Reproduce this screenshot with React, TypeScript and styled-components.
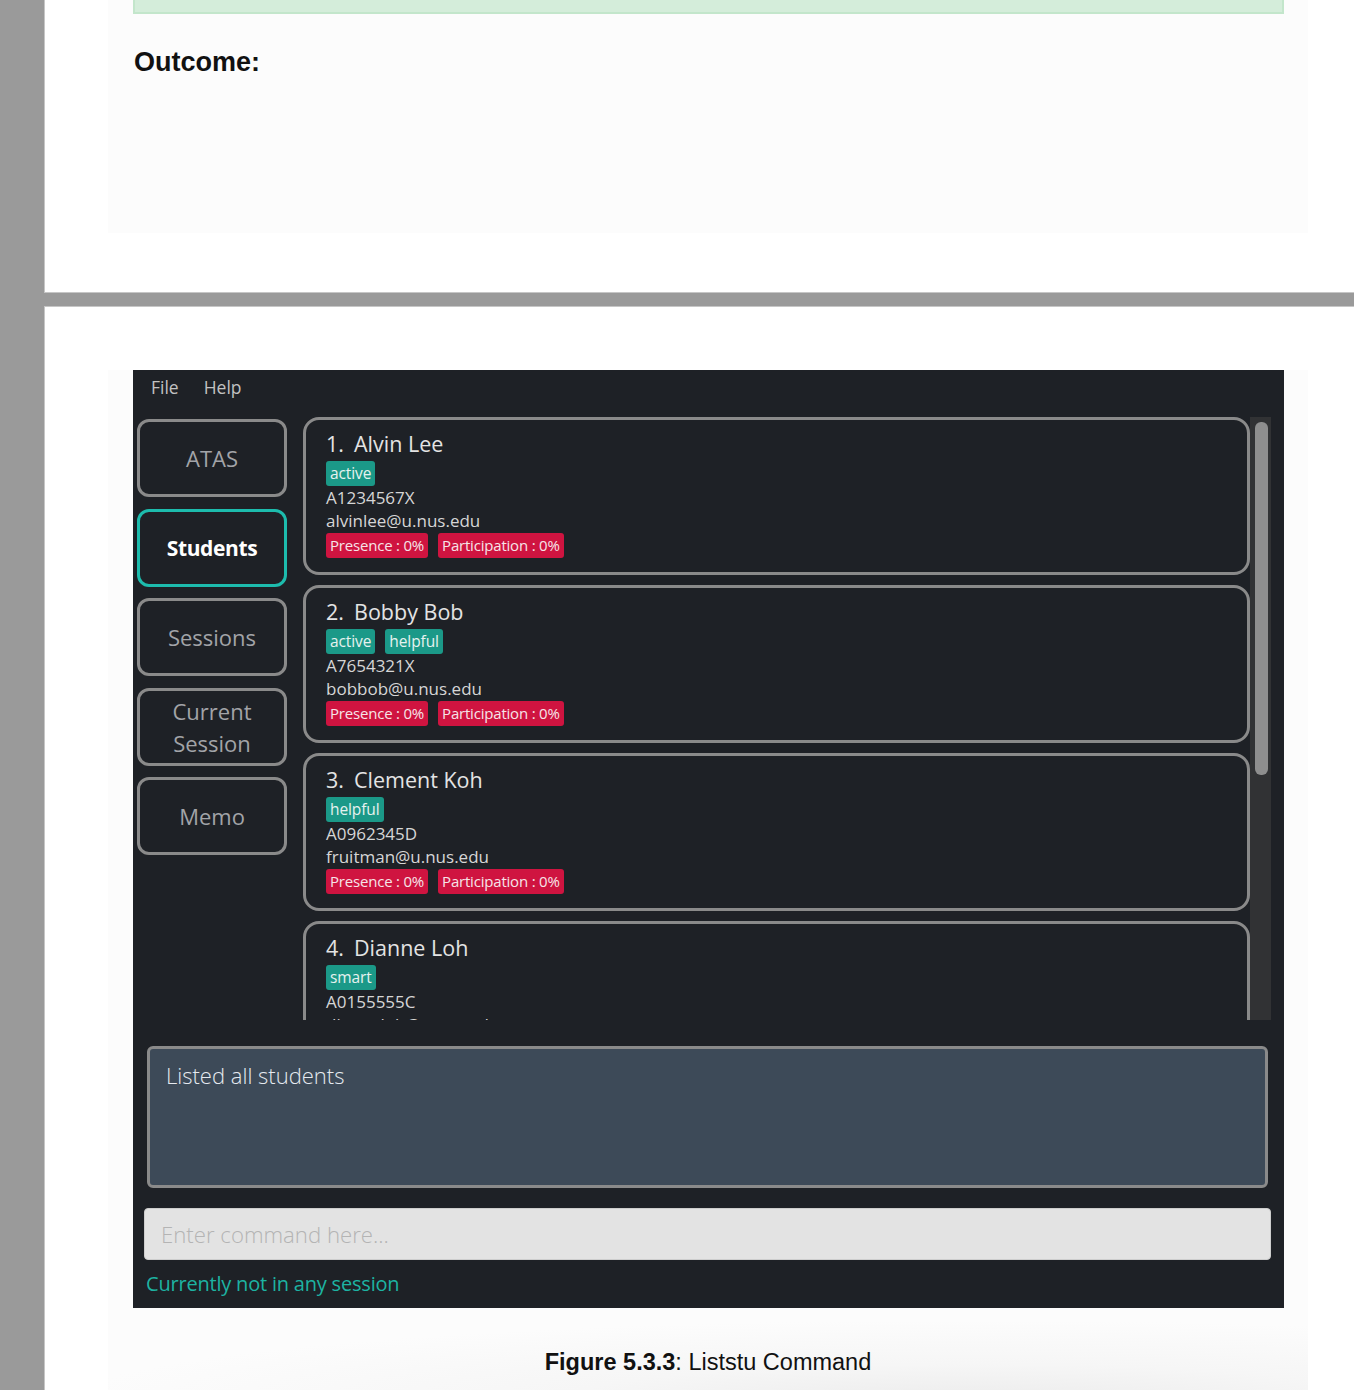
import React from "react";
import styled, { createGlobalStyle } from "styled-components";

const GlobalStyle = createGlobalStyle`
  html, body { margin: 0; padding: 0; background: #9a9a9a; }
  body { overflow: hidden; }
  * { box-sizing: border-box; }
`;

const Desk = styled.div`
  width: 1354px;
  height: 1390px;
  padding-left: 44px;
  display: flex;
  flex-direction: column;
  gap: 13px;
  background: #9a9a9a;
  overflow: hidden;
`;

const Page = styled.section<{ $first?: boolean }>`
  background: #ffffff;
  border: 1px solid #c6c6c6;
  border-right: none;
  flex-shrink: 0;
  ${(p) => (p.$first ? "border-top: none; height: 293px;" : "height: 1200px; padding-top: 63px;")}
`;

const Sheet = styled.div<{ $h?: number }>`
  margin-left: 63px;
  width: 1200px;
  background: #fcfcfc;
  ${(p) => (p.$h ? `height: ${p.$h}px;` : "")}
  display: flex;
  flex-direction: column;
`;

const LowerSheet = styled(Sheet)`
  height: 1100px;
  background: radial-gradient(ellipse 900px 80px at 72% 1030px, #ececec 0%, #f6f6f6 45%, #fcfcfc 100%);
`;

const AlertBox = styled.div`
  margin-left: 25px;
  width: 1151px;
  height: 14px;
  background: #d4edda;
  border: 2px solid #c3e6cb;
  border-top: none;
`;

const Heading = styled.h3`
  margin: 33px 0 0 26px;
  font-family: "Liberation Sans", Arial, sans-serif;
  font-weight: 700;
  font-size: 27px;
  line-height: 31px;
  color: #111;
`;

const AppWindow = styled.div`
  margin-left: 25px;
  width: 1151px;
  height: 938px;
  flex-shrink: 0;
  background: #1e2126;
  display: flex;
  flex-direction: column;
  font-family: "Open Sans", "Noto Sans", sans-serif;
`;

const MenuBar = styled.div`
  height: 34px;
  display: flex;
  align-items: center;
  gap: 25px;
  padding-left: 18px;
  font-size: 17.5px;
  color: #c2c2c2;
`;

const MenuItem = styled.span``;

const Body = styled.div`
  margin-top: 13px;
  height: 603px;
  display: flex;
`;

const Sidebar = styled.nav`
  width: 154px;
  padding: 2px 0 0 4px;
  display: flex;
  flex-direction: column;
  gap: 11.5px;
`;

const NavButton = styled.div<{ $active?: boolean }>`
  width: 150px;
  height: 78px;
  flex-shrink: 0;
  border: 3px solid ${(p) => (p.$active ? "#1dbcad" : "#8a8a8a")};
  border-radius: 12px;
  display: flex;
  align-items: center;
  justify-content: center;
  text-align: center;
  font-size: ${(p) => (p.$active ? "21px" : "22px")};
  line-height: 32px;
  letter-spacing: ${(p) => (p.$active ? "-0.4px" : "0")};
  font-weight: ${(p) => (p.$active ? 700 : 500)};
  color: ${(p) => (p.$active ? "#ffffff" : "#a2a4a8")};
`;

const ListPane = styled.div`
  margin-left: 16px;
  width: 968px;
  display: flex;
`;

const CardColumn = styled.div`
  width: 947px;
  height: 603px;
  overflow: hidden;
  display: flex;
  flex-direction: column;
  gap: 10px;
`;

const ScrollTrack = styled.div`
  width: 21px;
  height: 603px;
  background: #313234;
  padding: 5px 3px 0 5px;
`;

const ScrollThumb = styled.div`
  width: 13px;
  height: 353px;
  border-radius: 6px;
  background: #8e8e8e;
`;

const Card = styled.article`
  height: 158px;
  flex-shrink: 0;
  border: 3px solid #8a8a8a;
  border-radius: 16px;
  padding: 8px 20px 0 20px;
  color: #d8d8d8;
`;

const Title = styled.div`
  font-size: 21.5px;
  line-height: 32px;
  color: #e4e4e4;
  display: flex;
`;

const Num = styled.span`
  width: 28px;
`;

const ChipRow = styled.div`
  margin-top: 1px;
  height: 25px;
  display: flex;
  gap: 10px;
`;

const Chip = styled.span<{ $kind: "tag" | "stat" }>`
  height: 25px;
  padding: 0 4px;
  border-radius: 3px;
  font-size: ${(p) => (p.$kind === "tag" ? "15.5px" : "15px")};
  line-height: 25px;
  letter-spacing: ${(p) => (p.$kind === "tag" ? "-0.1px" : "-0.2px")};
  background: ${(p) => (p.$kind === "tag" ? "#1b9988" : "#cf1440")};
  color: ${(p) => (p.$kind === "tag" ? "#e6f2ef" : "#f6e4e8")};
`;

const InfoLine = styled.div`
  font-size: 17px;
  line-height: 23px;
  color: #d6d6d6;
`;

const ResultBox = styled.div`
  margin: 26px 0 0 14px;
  width: 1121px;
  height: 142px;
  background: #3d4a58;
  border: 3px solid #8a8a8a;
  border-radius: 6px;
  padding: 12px 16px;
  font-size: 22px;
  line-height: 28px;
  font-weight: 300;
  color: #e6eaf0;
`;

const CommandInput = styled.input`
  margin: 20px 0 0 11px;
  width: 1127px;
  height: 52px;
  background: #e3e3e3;
  border: 1px solid #cdcdcd;
  border-radius: 4px;
  padding: 0 16px;
  font-family: "Open Sans", "Noto Sans", sans-serif;
  font-size: 22.2px;
  font-weight: 300;
  color: #333;
  outline: none;
  &::placeholder { color: #b4b4b4; }
`;

const StatusLine = styled.div`
  margin: 11px 0 0 13px;
  font-size: 20px;
  line-height: 26px;
  letter-spacing: -0.2px;
  color: #1db3a2;
`;

const Caption = styled.p`
  margin: 41px 0 0 0;
  text-align: center;
  font-family: "Liberation Sans", Arial, sans-serif;
  font-size: 23.5px;
  line-height: 26px;
  color: #111;
  b { font-weight: 700; }
`;

type Student = {
  n: number;
  name: string;
  tags: string[];
  id: string;
  email: string;
};

const students: Student[] = [
  { n: 1, name: "Alvin Lee", tags: ["active"], id: "A1234567X", email: "alvinlee@u.nus.edu" },
  { n: 2, name: "Bobby Bob", tags: ["active", "helpful"], id: "A7654321X", email: "bobbob@u.nus.edu" },
  { n: 3, name: "Clement Koh", tags: ["helpful"], id: "A0962345D", email: "fruitman@u.nus.edu" },
  { n: 4, name: "Dianne Loh", tags: ["smart"], id: "A0155555C", email: "dianneloh@u.nus.edu" },
];

const navItems = [
  { label: "ATAS" },
  { label: "Students", active: true },
  { label: "Sessions" },
  { label: "Current Session", wrap: true },
  { label: "Memo" },
];

export default function App() {
  return (
    <>
      <GlobalStyle />
      <Desk>
        <Page $first>
          <Sheet $h={233}>
            <AlertBox />
            <Heading>Outcome:</Heading>
          </Sheet>
        </Page>
        <Page>
          <LowerSheet>
            <AppWindow>
              <MenuBar>
                <MenuItem>File</MenuItem>
                <MenuItem>Help</MenuItem>
              </MenuBar>
              <Body>
                <Sidebar>
                  {navItems.map((it) => (
                    <NavButton key={it.label} $active={it.active}>
                      {it.wrap ? (
                        <span>
                          Current
                          <br />
                          Session
                        </span>
                      ) : (
                        it.label
                      )}
                    </NavButton>
                  ))}
                </Sidebar>
                <ListPane>
                  <CardColumn>
                    {students.map((s) => (
                      <Card key={s.n}>
                        <Title>
                          <Num>{s.n}.</Num>
                          <span>{s.name}</span>
                        </Title>
                        <ChipRow>
                          {s.tags.map((t) => (
                            <Chip key={t} $kind="tag">
                              {t}
                            </Chip>
                          ))}
                        </ChipRow>
                        <InfoLine>{s.id}</InfoLine>
                        <InfoLine>{s.email}</InfoLine>
                        <ChipRow>
                          <Chip $kind="stat">Presence : 0%</Chip>
                          <Chip $kind="stat">Participation : 0%</Chip>
                        </ChipRow>
                      </Card>
                    ))}
                  </CardColumn>
                  <ScrollTrack>
                    <ScrollThumb />
                  </ScrollTrack>
                </ListPane>
              </Body>
              <ResultBox>Listed all students</ResultBox>
              <CommandInput placeholder="Enter command here..." />
              <StatusLine>Currently not in any session</StatusLine>
            </AppWindow>
            <Caption>
              <b>Figure 5.3.3</b>: Liststu Command
            </Caption>
          </LowerSheet>
        </Page>
      </Desk>
    </>
  );
}
